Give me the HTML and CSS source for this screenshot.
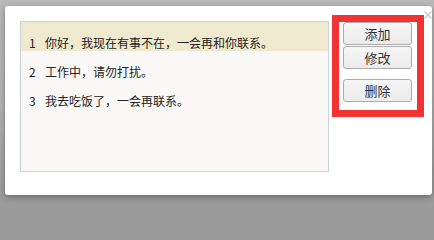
FILE: index.html
```html
<!DOCTYPE html>
<html lang="zh-CN">
<head>
<meta charset="utf-8">
<title>留言</title>
<link rel="stylesheet" href="styles.css">
</head>
<body>
<div class="dialog">
  <ul class="list">
    <li class="row active"><span class="num">1</span><span class="txt">你好，我现在有事不在，一会再和你联系。</span></li>
    <li class="row"><span class="num">2</span><span class="txt">工作中，请勿打扰。</span></li>
    <li class="row"><span class="num">3</span><span class="txt">我去吃饭了，一会再联系。</span></li>
  </ul>
  <div class="actions">
    <button class="btn">添加</button>
    <button class="btn">修改</button>
    <button class="btn btn-gap">删除</button>
  </div>
  <svg class="close" width="8" height="8" viewBox="0 0 8 8"><path d="M0.5 0.5L7.5 7.5M7.5 0.5L0.5 7.5" stroke="#c4c4c4" stroke-width="1.1" fill="none"/></svg>
  <div class="highlight"></div>
</div>
</body>
</html>
```
FILE: styles.css
```css
html {
  margin: 0;
  padding: 0;
  background: #9a9a9a;
}
body {
  margin: 0;
  width: 434px;
  height: 209px;
  overflow: hidden;
  background: linear-gradient(180deg, #b9b9b9 0%, #b3b3b3 50%, #9a9a9a 100%);
  font-family: "Noto Sans CJK SC", "Microsoft YaHei", sans-serif;
  padding-top: 6px;
  padding-left: 5px;
  box-sizing: border-box;
}
.dialog {
  position: relative;
  width: 427px;
  height: 189px;
  background: #ffffff;
  border-radius: 3px;
  box-shadow: 0 2px 6px rgba(0, 0, 0, 0.35);
  display: flex;
  align-items: flex-start;
  padding: 15px 0 0 15px;
  box-sizing: border-box;
}
.list {
  list-style: none;
  margin: 0;
  padding: 0;
  width: 309px;
  height: 151px;
  box-sizing: border-box;
  border: 1px solid #cdd2d9;
  background: #f9f8f6;
}
.row {
  height: 29px;
  box-sizing: border-box;
  padding: 13px 0 0 8px;
  line-height: 16px;
  font-size: 12px;
  color: #222;
  display: flex;
  white-space: nowrap;
}
.row.active {
  background: #efe9cf;
}
.num {
  width: 16px;
  flex: none;
}
.actions {
  display: flex;
  flex-direction: column;
  gap: 1px;
  margin-left: 14px;
  padding-top: 1px;
}
.btn {
  width: 69px;
  height: 23px;
  padding: 0;
  margin: 0;
  border: 1px solid #acacac;
  border-radius: 3px;
  background: linear-gradient(180deg, #f6f6f6 0%, #ebebeb 100%);
  color: #333;
  font-family: "Noto Sans CJK SC", "Microsoft YaHei", sans-serif;
  font-size: 13px;
  line-height: 20px;
}
.btn-gap {
  margin-top: 9px;
}
.close {
  position: absolute;
  left: 419px;
  top: 5px;
}
.highlight {
  position: absolute;
  left: 327px;
  top: 9px;
  width: 92px;
  height: 102px;
  box-sizing: border-box;
  border: 7px solid #f13333;
  pointer-events: none;
}
```
